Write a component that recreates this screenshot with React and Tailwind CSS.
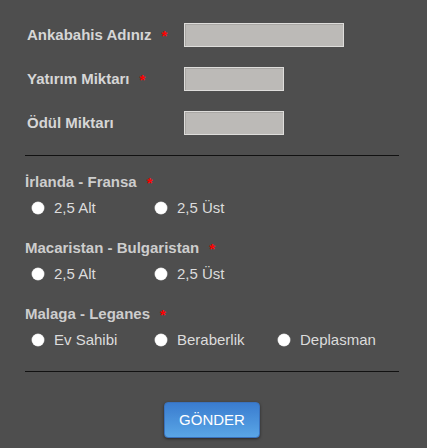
import React from "react";

const font = { fontFamily: '"Liberation Sans", Arial, sans-serif' };

function Star() {
  return <span className="ml-[10px] text-[15px] leading-none text-[#ff0000]">*</span>;
}

function TopRow({ label, required, inputW }) {
  return (
    <div className="flex items-center h-[24px]">
      <div className="w-[157px] flex items-center text-[15px] font-bold text-[#d6d6d6]">
        <span>{label}</span>
        {required && <Star />}
      </div>
      <div className={`${inputW} h-[24px] bg-[#bcbab7] border border-[#dedddb] shadow-[inset_1px_1px_0_#a9a7a4]`} />
    </div>
  );
}

function Radio({ text }) {
  return (
    <div className="flex items-center w-[123px] shrink-0">
      <span className="w-[12px] h-[12px] rounded-full bg-white shadow-[0_0_0_0.5px_#cfcfcf]" />
      <span className="ml-[10px] text-[15px] text-[#dcdcdc]">{text}</span>
    </div>
  );
}

function Section({ label, options }) {
  return (
    <div className="flex flex-col">
      <div className="h-[20px] flex items-center text-[15px] font-bold text-[#cdcdcd]">
        <span>{label}</span>
        <Star />
      </div>
      <div className="mt-[6px] h-[20px] flex items-center pl-[7px]">
        {options.map((o) => (
          <Radio key={o} text={o} />
        ))}
      </div>
    </div>
  );
}

export default function App() {
  return (
    <div className="w-[427px] h-[448px] bg-[#4e4e4e] overflow-hidden" style={font}>
      <div className="pt-[23px] pl-[25px] w-[399px]">
        <div className="flex flex-col gap-[20px] pl-[2px]">
          <TopRow label="Ankabahis Adınız" required inputW="w-[160px]" />
          <TopRow label="Yatırım Miktarı" required inputW="w-[100px]" />
          <TopRow label="Ödül Miktarı" inputW="w-[100px]" />
        </div>
        <div className="mt-[20px] h-px bg-[#111111]" />
        <div className="mt-[16px] flex flex-col gap-[20px]">
          <Section label="İrlanda - Fransa" options={["2,5 Alt", "2,5 Üst"]} />
          <Section label="Macaristan - Bulgaristan" options={["2,5 Alt", "2,5 Üst"]} />
          <Section label="Malaga - Leganes" options={["Ev Sahibi", "Beraberlik", "Deplasman"]} />
        </div>
        <div className="mt-[21px] h-px bg-[#111111]" />
        <div className="mt-[30px] flex justify-center">
          <button className="w-[96px] h-[36px] rounded-[4px] border border-[#3a72bd] bg-gradient-to-b from-[#3a7ccf] to-[#5aa6e6] text-white text-[15px] shadow-[0_1px_3px_rgba(0,0,0,0.5)]">
            GÖNDER
          </button>
        </div>
      </div>
    </div>
  );
}
